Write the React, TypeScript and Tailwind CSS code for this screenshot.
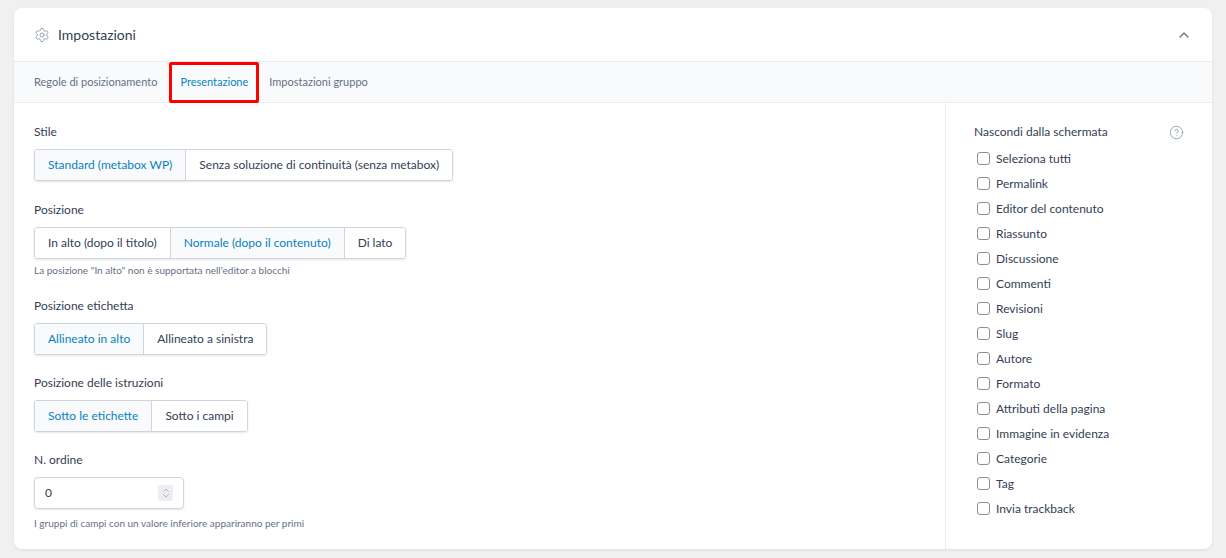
import React from 'react';
import { ChevronUp, Settings, CircleHelp, ChevronsUpDown } from 'lucide-react';

const Group: React.FC<{ options: string[]; active: number }> = ({ options, active }) => (
  <div className="inline-flex rounded-[3px] border border-[#d0d5dd] shadow-[0_1px_2px_rgba(16,24,40,0.1)] overflow-hidden">
    {options.map((o, i) => (
      <div
        key={o}
        className={`h-[30px] px-[13px] flex items-center text-[12px] ${i > 0 ? 'border-l border-[#d0d5dd]' : ''} ${
          i === active ? 'bg-[#f9fafb] text-[#0783be]' : 'bg-white text-[#344054]'
        }`}
      >
        {o}
      </div>
    ))}
  </div>
);

const hideItems = [
  'Seleziona tutti', 'Permalink', 'Editor del contenuto', 'Riassunto', 'Discussione', 'Commenti',
  'Revisioni', 'Slug', 'Autore', 'Formato', 'Attributi della pagina', 'Immagine in evidenza',
  'Categorie', 'Tag', 'Invia trackback',
];

export default function App() {
  return (
    <div className="min-h-[558px] bg-[#f0f0f1] pt-2 px-[14px] pb-[11px] text-[#344054]" style={{ fontFamily: 'Lato, "Noto Sans", sans-serif' }}>
      <div className="bg-white rounded-lg shadow-[0_1px_3px_rgba(0,0,0,0.08)] overflow-hidden">
        {/* Header */}
        <div className="h-[54px] flex items-center justify-between px-5 border-b border-[#eaecf0]">
          <div className="flex items-center gap-2">
            <Settings className="w-4 h-4 text-[#98a2b3]" strokeWidth={1.5} />
            <span className="text-[14px] text-[#344054]">Impostazioni</span>
          </div>
          <ChevronUp className="w-4 h-4 text-[#667085]" />
        </div>
        {/* Tabs */}
        <div className="h-[41px] flex items-center px-5 bg-[#f9fafb] border-b border-[#eaecf0] text-[11px]">
          <span className="text-[#667085] mr-[12px]">Regole di posizionamento</span>
          <span className="text-[#0783be] h-[41px] flex items-center px-[8px] border-[3px] border-[#ff0000] rounded-[2px]">Presentazione</span>
          <span className="text-[#667085] ml-[10px]">Impostazioni gruppo</span>
        </div>
        {/* Body */}
        <div className="flex">
          <div className="flex-1 px-5 pt-[20px] pb-[18px] text-[12px]">
            <div className="mb-[8px]">Stile</div>
            <Group options={['Standard (metabox WP)', 'Senza soluzione di continuità (senza metabox)']} active={0} />
            <div className="mt-[20px] mb-[8px]">Posizione</div>
            <Group options={['In alto (dopo il titolo)', 'Normale (dopo il contenuto)', 'Di lato']} active={1} />
            <div className="mt-[4px] text-[10px] text-[#667085]">La posizione "In alto" non è supportata nell'editor a blocchi</div>
            <div className="mt-[19px] mb-[8px]">Posizione etichetta</div>
            <Group options={['Allineato in alto', 'Allineato a sinistra']} active={0} />
            <div className="mt-[19px] mb-[8px]">Posizione delle istruzioni</div>
            <Group options={['Sotto le etichette', 'Sotto i campi']} active={0} />
            <div className="mt-[19px] mb-[8px]">N. ordine</div>
            <div className="w-[150px] h-[32px] border border-[#d0d5dd] rounded-[4px] flex items-center justify-between pl-[10px] pr-[10px] shadow-[0_1px_2px_rgba(16,24,40,0.1)]">
              <span>0</span>
              <span className="bg-[#eceef2] rounded-[2px] w-[15px] h-[16px] flex items-center justify-center">
                <ChevronsUpDown className="w-3 h-3 text-[#98a2b3]" strokeWidth={1.5} />
              </span>
            </div>
            <div className="mt-[7px] text-[10px] text-[#667085]">I gruppi di campi con un valore inferiore appariranno per primi</div>
          </div>
          <div className="w-[267px] border-l border-[#eaecf0] pl-[28px] pr-[28px] pt-[20px] text-[12px]">
            <div className="flex items-center justify-between mb-[5px]">
              <span>Nascondi dalla schermata</span>
              <CircleHelp className="w-[15px] h-[15px] text-[#98a2b3]" strokeWidth={1.5} />
            </div>
            <div className="flex flex-col">
              {hideItems.map((t) => (
                <label key={t} className="h-[25px] flex items-center gap-[6px]">
                  <span className="ml-[3px] w-[13px] h-[13px] border border-[#8c8f94] rounded-[3px] bg-white" />
                  <span>{t}</span>
                </label>
              ))}
            </div>
          </div>
        </div>
      </div>
    </div>
  );
}
